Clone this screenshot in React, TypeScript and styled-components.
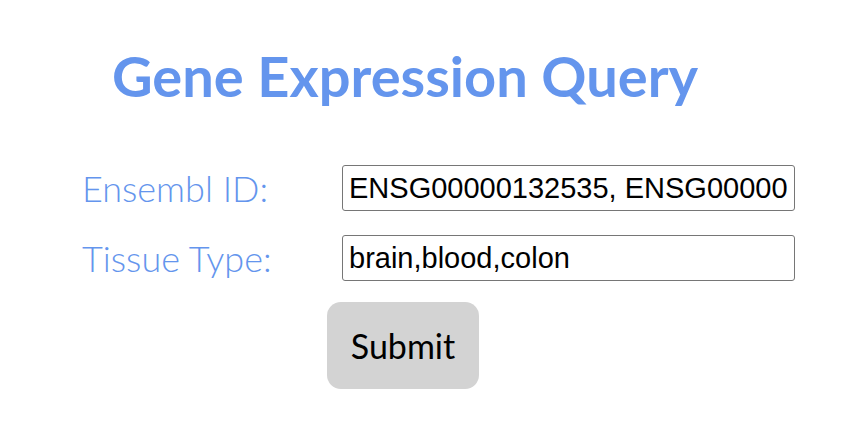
import styled, { createGlobalStyle } from "styled-components";

const GlobalStyle = createGlobalStyle`
  body {
    margin: 0;
    background: #ffffff;
    font-family: "Lato", "Noto Sans", sans-serif;
  }
`;

const Page = styled.div`
  width: 852px;
  height: 438px;
  box-sizing: border-box;
  padding-top: 42px;
`;

const Title = styled.h1`
  margin: 0 0 0 112px;
  font-size: 56px;
  font-weight: 700;
  line-height: 68px;
  color: cornflowerblue;
`;

const Form = styled.form`
  display: grid;
  grid-template-columns: 260px 453px;
  row-gap: 24px;
  align-items: center;
  margin: 55px 0 0 82px;
`;

const Label = styled.label`
  font-size: 36px;
  font-weight: 300;
  line-height: 46px;
  color: cornflowerblue;
`;

const Input = styled.input`
  box-sizing: border-box;
  width: 453px;
  height: 46px;
  padding: 0 6px;
  border: 1.5px solid #767676;
  border-radius: 3px;
  font-family: "Liberation Sans", Arial, sans-serif;
  font-size: 29px;
  color: #000;
`;

const ButtonRow = styled.div`
  padding: 21px 0 0 327px;
`;

const SubmitButton = styled.button`
  width: 152px;
  height: 87px;
  border: none;
  border-radius: 14px;
  background: lightgray;
  font-family: "Lato", "Noto Sans", sans-serif;
  font-size: 34px;
  color: #000;
`;

export default function App() {
  return (
    <Page>
      <GlobalStyle />
      <Title>Gene Expression Query</Title>
      <Form onSubmit={(e) => e.preventDefault()}>
        <Label htmlFor="ensembl">Ensembl ID:</Label>
        <Input
          id="ensembl"
          defaultValue="ENSG00000132535, ENSG00000132535"
        />
        <Label htmlFor="tissue">Tissue Type:</Label>
        <Input id="tissue" defaultValue="brain,blood,colon" />
      </Form>
      <ButtonRow>
        <SubmitButton type="submit">Submit</SubmitButton>
      </ButtonRow>
    </Page>
  );
}
